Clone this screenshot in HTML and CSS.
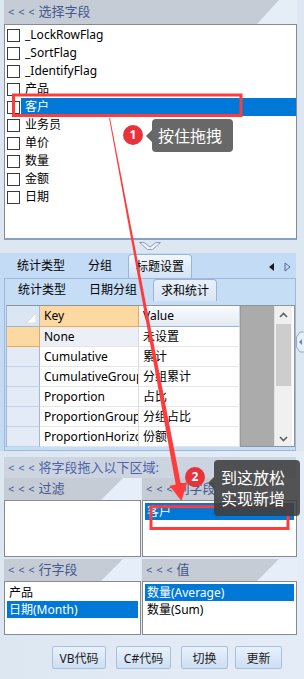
FILE: index.html
```html
<!DOCTYPE html>
<html>
<head>
<meta charset="utf-8">
<link rel="stylesheet" href="styles.css">
</head>
<body>
<div class="app">
  <section class="field-pane">
    <div class="hdr"><div class="hdr-label"><span class="arrows">&lt; &lt; &lt;</span> 选择字段</div></div>
    <ul class="field-list">
      <li><span class="cb"></span><span class="lbl">_LockRowFlag</span></li>
      <li><span class="cb"></span><span class="lbl">_SortFlag</span></li>
      <li><span class="cb"></span><span class="lbl">_IdentifyFlag</span></li>
      <li><span class="cb"></span><span class="lbl">产品</span></li>
      <li class="sel"><span class="cb"></span><span class="lbl">客户</span></li>
      <li><span class="cb"></span><span class="lbl">业务员</span></li>
      <li><span class="cb"></span><span class="lbl">单价</span></li>
      <li><span class="cb"></span><span class="lbl">数量</span></li>
      <li><span class="cb"></span><span class="lbl">金额</span></li>
      <li><span class="cb"></span><span class="lbl">日期</span></li>
    </ul>
  </section>

  <div class="splitter">
    <svg class="chev" width="22" height="8" viewBox="0 0 22 8"><path d="M0.5 0.5 L5 0.5 L11 5 L17 0.5 L21.5 0.5 L13.5 7.5 L8.5 7.5 Z" fill="#eef3f9" stroke="#8a9fbf" stroke-width="1"/></svg>
  </div>

  <section class="tabs-area">
    <div class="tabs1">
      <span class="tab">统计类型</span>
      <span class="tab">分组</span>
      <span class="tab active">标题设置</span>
      <span class="tab-nav">
        <svg width="8" height="10" viewBox="0 0 8 10"><path d="M6 1 L1 5 L6 9 Z" fill="#1a1a1a"/></svg>
        <svg width="8" height="10" viewBox="0 0 8 10"><path d="M2 1 L7 5 L2 9 Z" fill="none" stroke="#4d66a3" stroke-width="1"/></svg>
      </span>
    </div>
    <div class="panel">
      <div class="tabs2">
        <span class="tab">统计类型</span>
        <span class="tab">日期分组</span>
        <span class="tab active">求和统计</span>
      </div>
      <div class="grid-wrap">
        <div class="grid">
          <div class="rh corner"><svg width="10" height="10" viewBox="0 0 10 10"><path d="M10 0 L10 10 L0 10 Z" fill="#fff" stroke="#b9c4d2" stroke-width="0.6"/></svg></div>
          <div class="ch key-h">Key</div>
          <div class="ch val-h">Value</div>

          <div class="rh cur"></div><div class="c k first">None</div><div class="c">未设置</div>
          <div class="rh"></div><div class="c k">Cumulative</div><div class="c">累计</div>
          <div class="rh"></div><div class="c k">CumulativeGroup</div><div class="c">分组累计</div>
          <div class="rh"></div><div class="c k">Proportion</div><div class="c">占比</div>
          <div class="rh"></div><div class="c k">ProportionGroup</div><div class="c">分组占比</div>
          <div class="rh"></div><div class="c k">ProportionHorizontal</div><div class="c">份额</div>
        </div>
        <div class="gray-fill"></div>
        <div class="vscroll">
          <svg class="sarrow" width="17" height="14" viewBox="0 0 17 14"><path d="M5 9 L8.5 5.5 L12 9" fill="none" stroke="#606060" stroke-width="1.6"/></svg>
          <div class="thumb"></div>
          <div class="track"></div>
          <svg class="sarrow" width="17" height="14" viewBox="0 0 17 14"><path d="M5 5 L8.5 8.5 L12 5" fill="none" stroke="#606060" stroke-width="1.6"/></svg>
        </div>
      </div>
    </div>
    <svg class="grip" width="8" height="22" viewBox="0 0 8 22"><path d="M8 1 L4 1 L0.5 6 L0.5 16 L4 21 L8 21" fill="#e7eef8" stroke="#93aacb" stroke-width="1"/><path d="M6 8 L3 11 L6 14 Z" fill="#6a86b5"/></svg>
  </section>

  <section class="drop-pane">
    <div class="drop-hdr"><span class="arrows">&lt; &lt; &lt;</span> 将字段拖入以下区域:</div>
    <div class="quads">
      <div class="quad">
        <div class="qhdr"><div class="qlabel"><span class="arrows">&lt; &lt; &lt;</span> 过滤</div></div>
        <ul class="qbox q1"></ul>
      </div>
      <div class="quad">
        <div class="qhdr"><div class="qlabel"><span class="arrows">&lt; &lt; &lt;</span> 列字段</div></div>
        <ul class="qbox q1"><li class="sel">客户</li></ul>
      </div>
      <div class="quad">
        <div class="qhdr"><div class="qlabel"><span class="arrows">&lt; &lt; &lt;</span> 行字段</div></div>
        <ul class="qbox q2"><li>产品</li><li class="sel">日期(Month)</li></ul>
      </div>
      <div class="quad">
        <div class="qhdr"><div class="qlabel"><span class="arrows">&lt; &lt; &lt;</span> 值</div></div>
        <ul class="qbox q2"><li class="sel">数量(Average)</li><li>数量(Sum)</li></ul>
      </div>
    </div>
    <div class="buttons">
      <button class="btn b-vb">VB代码</button>
      <button class="btn b-cs">C#代码</button>
      <button class="btn b-sw">切换</button>
      <button class="btn b-up">更新</button>
    </div>
  </section>
</div>

<svg class="overlay" width="304" height="679" viewBox="0 0 304 679">
  <rect x="13.5" y="95" width="227.5" height="20.5" fill="none" stroke="#ff3b3b" stroke-width="3"/>
  <rect x="151" y="506.7" width="137" height="21.8" fill="none" stroke="#ff3b3b" stroke-width="3"/>
  <polygon points="109.1,118.1 110.0,117.9 181.3,486.5 176.3,487.5" fill="#ff3b3b"/>
  <polygon points="169.6,485.7 187.2,482.3 181.4,501" fill="#ff3b3b"/>
</svg>
<div class="badge badge1">1</div>
<div class="tip tip1">按住拖拽</div>
<div class="badge badge2">2</div>
<div class="tip tip2">到这放松<br>实现新增</div>
</body>
</html>
```
FILE: styles.css
```css
* { box-sizing: border-box; }
html, body { margin: 0; padding: 0; }
body {
  width: 304px;
  height: 679px;
  overflow: hidden;
  position: relative;
  background: #dde7f2;
  font-family: "Noto Sans", "Noto Sans CJK SC", sans-serif;
  font-size: 12px;
  color: #000;
}
.app { display: flex; flex-direction: column; width: 304px; height: 679px; }

.arrows { font-size: 11px; letter-spacing: 0.5px; }

/* field pane */
.field-pane { margin-left: 4px; width: 293px; }
.hdr { height: 24px; background: #e5edf7; }
.hdr-label {
  height: 24px; line-height: 23px;
  background: #c5ccd5;
  clip-path: polygon(0 0, calc(100% - 18px) 0, calc(100% - 40px) 100%, 0 100%);
  padding-left: 4px;
  font-size: 13px; color: #46578f;
  white-space: nowrap;
}
.field-list {
  list-style: none; margin: 0; padding: 1px 0 0 0;
  height: 216px;
  background: #fff;
  border: 1px solid #868a92;
  border-bottom: 2px solid #8ba1c2;
}
.field-list li { height: 18px; display: flex; align-items: center; }
.cb { width: 13px; height: 13px; border: 1px solid #3a3a3a; margin-left: 2px; margin-right: 1px; flex: none; background: #fff; }
.lbl { flex: 1; height: 18px; line-height: 18px; padding-left: 4px; white-space: nowrap; }
.field-list li.sel .lbl { background: #0078d7; color: #fff; }

/* splitter */
.splitter { height: 13px; display: flex; justify-content: center; padding-top: 2px; width: 300px; }
.chev { margin-left: 0; }

/* tabs area */
.tabs-area { position: relative; width: 296px; height: 198px; background: #c4dbf5; }
.tabs1 { height: 25px; display: flex; align-items: flex-end; padding-left: 9px; gap: 7px; }
.tab { padding: 0 8px; height: 24px; line-height: 24px; white-space: nowrap; font-size: 12px; }
.tab.active {
  border: 1px solid #9ab5d8; border-bottom: none;
  border-radius: 4px 4px 0 0;
  background: linear-gradient(#f2f7fd, #d3e2f3);
  padding: 0 7px;
}
.tabs1 .tab.active { margin-left: 1px; }
.tab-nav { margin-left: auto; margin-right: 5px; display: flex; gap: 7px; align-self: center; padding-top: 2px; }

.panel {
  margin-left: 4px; width: 292px; height: 173px;
  border: 1px solid #9db8da; border-top: 1px solid #9db8da;
  background: #c6ddf6;
}
.tabs2 { height: 22px; display: flex; align-items: flex-end; padding-left: 5px; gap: 7px; }
.tabs2 .tab { height: 22px; line-height: 22px; }
.tabs2 .tab.active { margin-left: 1px; background: linear-gradient(#e8f0fa, #d9e6f6); }

.grid-wrap {
  margin: 4px 0 0 1px;
  width: 289px; height: 142px;
  border: 1px solid #8f949b; border-left-color: #a5b4c8;
  display: flex; background: #fff;
}
.grid {
  width: 233px;
  display: grid;
  grid-template-columns: 33px 99px 101px;
  grid-template-rows: 21px repeat(6, 20px);
}
.rh { background: #e3ebf6; border-right: 1px solid #a3b9d6; border-bottom: 1px solid #c3d2e6; }
.rh.corner { background: #dbe6f4; display: flex; align-items: flex-end; justify-content: flex-end; padding: 0 3px 3px 0; border-bottom: 1px solid #9db4d3; }
.rh.cur { background: #fcd9a1; border-right: 1px solid #f0a84e; border-bottom: 1px solid #f0a84e; }
.ch { line-height: 20px; padding-left: 4px; white-space: nowrap; overflow: hidden; }
.key-h { background: #fcd9a1; border-right: 1px solid #f0a84e; border-bottom: 1px solid #f0a84e; }
.val-h { background: linear-gradient(#f9fbfe, #e4eaf3); border-bottom: 1px solid #9db4d3; border-right: 1px solid #c8d3e2; }
.c {
  line-height: 19px; padding-left: 4px;
  white-space: nowrap; overflow: hidden;
  border-bottom: 1px solid #e6e6e6; border-right: 1px solid #dadada;
  font-family: "Noto Sans", "Noto Sans CJK SC", sans-serif;
}
.c.k.first { background: #eceff6; }
.gray-fill { width: 34px; background: #ababab; border-left: 1px solid #9a9a9a; }
.vscroll { width: 18px; background: #f0f0f0; display: flex; flex-direction: column; align-items: center; border-left: 1px solid #e3e3e3; }
.sarrow { flex: none; margin-top: 2px; }
.thumb { width: 15px; height: 62px; background: #cdcdcd; margin-top: 2px; }
.track { flex: 1; }

.grip { position: absolute; left: 296px; top: 78px; }

/* drop pane */
.drop-pane { width: 304px; flex: 1; background: linear-gradient(to right, #dde7f2, #e4ecf7); padding-top: 6px; }
.drop-hdr {
  margin-left: 4px; width: 292px; height: 21px; line-height: 21px;
  background: #cbd4df; color: #4f62a8; font-size: 13px; padding-left: 4px; white-space: nowrap;
}
.quads {
  margin-left: 4px; width: 293px;
  display: grid; grid-template-columns: 137px 155px; column-gap: 1px;
  grid-template-rows: 79px 76px; row-gap: 2px;
}
.quad { display: flex; flex-direction: column; }
.qhdr { height: 22px; background: #e6eef9; flex: none; }
.qlabel {
  height: 22px; line-height: 21px; padding-left: 4px;
  background: #c5ccd5; color: #46578f; font-size: 13px; white-space: nowrap;
  clip-path: polygon(0 0, calc(100% - 18px) 0, calc(100% - 40px) 100%, 0 100%);
}
.qbox { list-style: none; margin: 0; padding: 2px 2px 0 2px; flex: 1; background: #fff; border: 1px solid #8a8a8a; }
.qbox li { height: 17px; line-height: 17px; padding-left: 2px; white-space: nowrap; }
.qbox li.sel { background: #0078d7; color: #fff; }

.buttons { display: flex; padding-top: 11px; padding-left: 52px; }
.btn {
  height: 23px; padding: 0;
  font-family: "Noto Sans", "Noto Sans CJK SC", sans-serif; font-size: 12px; color: #1a1a1a;
  background: linear-gradient(#e9f1fb, #cddff3);
  border: 1px solid #a8c0de; border-radius: 2px;
}
.b-vb { width: 54px; }
.b-cs { width: 55px; margin-left: 10px; }
.b-sw { width: 47px; margin-left: 10px; }
.b-up { width: 47px; margin-left: 7px; }

/* annotations */
.overlay { position: absolute; left: 0; top: 0; pointer-events: none; }
.badge {
  position: absolute; width: 20px; height: 20px; border-radius: 50%;
  background: #e8323c; color: #fff; font-size: 12px; font-weight: bold;
  text-align: center; line-height: 20px;
}
.badge1 { left: 123px; top: 125px; }
.badge2 { left: 185px; top: 467px; }
.tip {
  position: absolute; color: #fff; font-size: 16px;
  font-family: "Noto Sans CJK SC", sans-serif;
  border-radius: 4px;
}
.tip::before {
  content: ""; position: absolute; left: -6px; top: 50%; margin-top: -6px;
  border-top: 6px solid transparent; border-bottom: 6px solid transparent;
  border-right: 6px solid #666;
}
.tip1 { left: 152px; top: 119px; width: 81px; height: 33px; line-height: 33px; padding-left: 6px; background: #686868; }
.tip2 { left: 214px; top: 460px; width: 86px; height: 56px; line-height: 21px; padding: 7px 0 0 7px; background: rgba(62, 62, 62, 0.88); }
.tip2::before { top: 17px; margin-top: 0; border-right-color: rgba(62, 62, 62, 0.88); }
```
